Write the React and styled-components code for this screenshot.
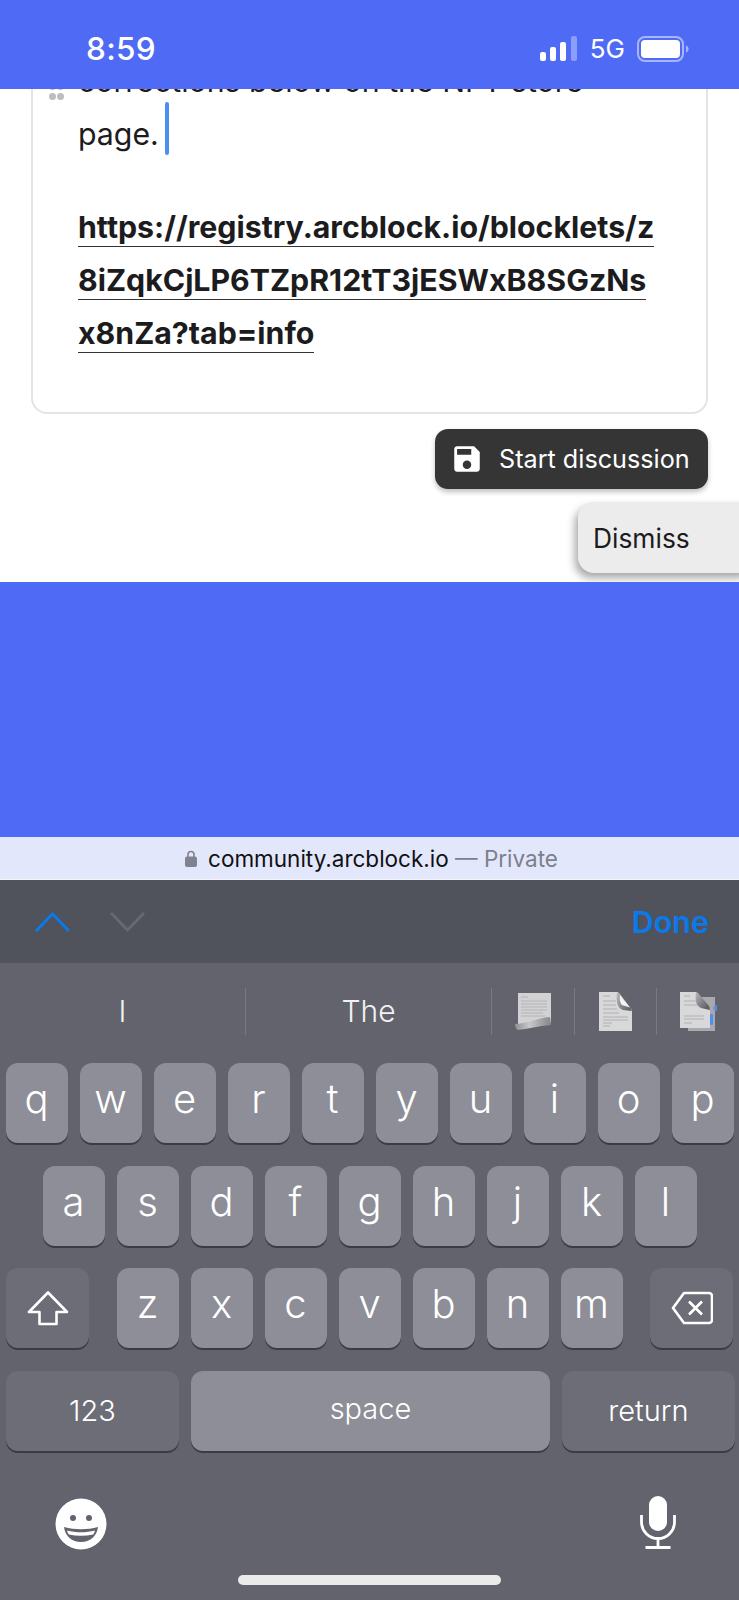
import React from 'react';
import styled, { createGlobalStyle } from 'styled-components';

const GlobalStyle = createGlobalStyle`
  html, body {
    margin: 0;
    padding: 0;
    background: #4f6bf5;
    font-family: Inter, 'Liberation Sans', sans-serif;
  }
`;

const Phone = styled.div`
  width: 739px;
  height: 1600px;
  display: flex;
  flex-direction: column;
  overflow: hidden;
`;

const StatusBar = styled.div`
  height: 89px;
  flex: none;
  background: #4f6bf5;
  color: #fff;
  display: flex;
  align-items: center;
  padding: 8px 50px 0 86px;
  box-sizing: border-box;
  position: relative;
  z-index: 2;
`;

const Time = styled.div`
  font-size: 31.5px;
  font-weight: 500;
  letter-spacing: 0.3px;
  flex: 1;
`;

const StatusRight = styled.div`
  display: flex;
  align-items: center;
  gap: 12px;
`;

const Network = styled.span`
  font-size: 26px;
  font-weight: 400;
`;

const Page = styled.div`
  height: 493px;
  flex: none;
  background: #fff;
  padding: 0 31px;
  position: relative;
  overflow: hidden;
`;

const EditorCard = styled.div`
  height: 461px;
  margin-top: -136px;
  box-sizing: border-box;
  border: 2px solid #e4e4e6;
  border-radius: 16px;
  padding: 100px 0 0 45px;
  color: #1c1c1e;
  font-size: 30.3px;
  line-height: 53px;
  position: relative;
`;

const DragHandle = styled.div`
  position: absolute;
  left: 16px;
  top: 128px;
  display: grid;
  grid-template-columns: 7px 7px;
  gap: 3px 1px;
  span {
    width: 7px;
    height: 7px;
    border-radius: 50%;
    background: #bdbdbd;
  }
`;

const Paragraph = styled.div`
  white-space: pre;
  margin-bottom: 40px;
`;

const Caret = styled.span`
  display: inline-block;
  width: 4px;
  height: 53px;
  margin: -20px 0 -20px 6px;
  border-radius: 2px;
  background: #4a90ee;
  vertical-align: 10.5px;
`;

const LinkLine = styled.div`
  font-weight: 700;
`;

const LinkText = styled.span`
  border-bottom: 1.5px solid #333;
  padding-bottom: 1px;
`;

const SaveButton = styled.div`
  width: 273px;
  height: 60px;
  margin: 15px 0 0 auto;
  box-sizing: border-box;
  padding-left: 15px;
  display: flex;
  align-items: center;
  gap: 15px;
  border-radius: 13px;
  background: #353535;
  color: #fff;
  font-size: 25.2px;
  font-weight: 400;
  box-shadow: 0 3px 5px rgba(0, 0, 0, 0.25);
`;

const DismissTab = styled.div`
  position: absolute;
  left: 578px;
  top: 413px;
  width: 180px;
  height: 71px;
  box-sizing: border-box;
  padding-left: 15px;
  display: flex;
  align-items: center;
  border-radius: 16px;
  background: #ececec;
  color: #1c1c1e;
  font-size: 26.4px;
  box-shadow: -3px 5px 8px rgba(0, 0, 0, 0.35);
`;

const BlueGap = styled.div`
  height: 255px;
  flex: none;
  background: #4f6bf5;
`;

const UrlBar = styled.div`
  height: 43px;
  flex: none;
  box-sizing: border-box;
  background: #e3e7fb;
  border-bottom: 1px solid #f4f4f6;
  padding-left: 4px;
  display: flex;
  align-items: center;
  justify-content: center;
  gap: 11px;
  font-size: 22.5px;
  color: #111;
`;

const Muted = styled.span`
  color: #7d7f8d;
`;

const Toolbar = styled.div`
  height: 83px;
  flex: none;
  box-sizing: border-box;
  padding: 0 30px 0 35px;
  background: #50525c;
  display: flex;
  align-items: center;
  gap: 40px;
`;

const Done = styled.div`
  margin-left: auto;
  color: #0a7aea;
  font-size: 30.5px;
  font-weight: 600;
`;

const Keyboard = styled.div`
  flex: 1;
  background: #62636d;
  position: relative;
`;

const Suggestions = styled.div`
  height: 100px;
  box-sizing: border-box;
  padding-bottom: 4px;
  display: flex;
  align-items: center;
  color: #f2f2f4;
  font-size: 30px;
  font-weight: 300;
`;

const Suggestion = styled.div`
  width: ${({ $width }) => $width}px;
  height: 47px;
  flex: none;
  display: flex;
  align-items: center;
  justify-content: center;
  border-right: ${({ $last }) => ($last ? 'none' : '1px solid #787983')};
  box-sizing: border-box;
`;

const KeyRows = styled.div`
  display: flex;
  flex-direction: column;
  gap: 22.5px;
  padding: 0 6px;
`;

const KeyRow = styled.div`
  display: flex;
  gap: 12px;
  justify-content: ${({ $justify }) => $justify || 'center'};
`;

const KeyGroup = styled.div`
  display: flex;
  gap: 12px;
`;

const Key = styled.div`
  width: ${({ $width }) => $width || 62}px;
  height: 80px;
  flex: none;
  border-radius: 12px;
  background: ${({ $dark }) => ($dark ? '#6c6d76' : '#8d8e97')};
  box-shadow: 0 2px 0 #3b3c43;
  color: #fff;
  display: flex;
  align-items: center;
  justify-content: center;
  font-size: ${({ $small }) => ($small ? 29 : 40)}px;
  font-weight: 300;
  padding-bottom: ${({ $small, $lift }) => ($lift ? $lift : $small ? 0 : 9)}px;
  box-sizing: border-box;
`;

const BottomIcons = styled.div`
  display: flex;
  justify-content: space-between;
  align-items: flex-start;
  padding: 47px 63px 0 55px;
`;

const MicSlot = styled.div`
  margin-top: -2px;
`;

const HomeIndicator = styled.div`
  position: absolute;
  left: 238px;
  bottom: 15px;
  width: 263px;
  height: 10px;
  border-radius: 5px;
  background: #ebebeb;
`;

const rowOne = ['q', 'w', 'e', 'r', 't', 'y', 'u', 'i', 'o', 'p'];
const rowTwo = ['a', 's', 'd', 'f', 'g', 'h', 'j', 'k', 'l'];
const rowThree = ['z', 'x', 'c', 'v', 'b', 'n', 'm'];

const SignalIcon = () => (
  <svg width="38" height="25" viewBox="0 0 38 25">
    <rect x="0" y="16" width="6" height="9" rx="2" fill="#fff" />
    <rect x="10" y="11" width="6" height="14" rx="2" fill="#fff" />
    <rect x="20" y="6" width="6" height="19" rx="2" fill="#fff" />
    <rect x="31" y="0" width="6" height="25" rx="2" fill="#fff" fillOpacity="0.35" />
  </svg>
);

const BatteryIcon = () => (
  <svg width="52" height="26" viewBox="0 0 52 26">
    <rect x="1" y="1" width="45" height="24" rx="7" fill="none" stroke="#fff" strokeOpacity="0.5" strokeWidth="2" />
    <rect x="4" y="4" width="39" height="18" rx="4" fill="#fff" />
    <path d="M49 9.5c1.6.6 2.6 2 2.6 3.5s-1 2.9-2.6 3.5z" fill="#fff" fillOpacity="0.5" />
  </svg>
);

const SaveIcon = () => (
  <svg width="34" height="34" viewBox="0 0 24 24" fill="#fff">
    <path d="M17 3H5c-1.11 0-2 .9-2 2v14c0 1.1.89 2 2 2h14c1.1 0 2-.9 2-2V7l-4-4zm-5 16c-1.66 0-3-1.34-3-3s1.34-3 3-3 3 1.34 3 3-1.34 3-3 3zm3-10H5V5h10v4z" />
  </svg>
);

const LockIcon = () => (
  <svg width="12" height="17" viewBox="0 0 12 17">
    <path d="M3 7V4.500a3 3 0 0 1 6 0V7" fill="none" stroke="#80828f" strokeWidth="1.6" />
    <rect x="0" y="6.500" width="12" height="10.500" rx="2" fill="#80828f" />
  </svg>
);

const ChevronIcon = ({ up, color }) => (
  <svg width="35" height="20" viewBox="0 0 35 20">
    <path d={up ? 'M1 19L17.500 2L34 19' : 'M1 1L17.500 18L34 1'} fill="none" stroke={color} strokeWidth="3" />
  </svg>
);

const PageCurlIcon = () => (
  <svg width="36" height="37" viewBox="0 0 36 37">
    <defs>
      <linearGradient id="curlBand" x1="0" y1="0" x2="1" y2="0">
        <stop offset="0" stopColor="#8f8f94" />
        <stop offset="0.4" stopColor="#c8c8ca" />
        <stop offset="1" stopColor="#85858a" />
      </linearGradient>
    </defs>
    <path d="M3 0h33v30L3 32z" fill="#d2d2d4" />
    <path d="M6 4h7M6 8h26M6 11h26M6 14h26M6 17h26M6 20h22M6 23h24" stroke="#b4b4b8" strokeWidth="1" />
    <path d="M0 31c10 0 22-6 35-7l1 8c-12 1-24 4-33 5c-2-1-3-3-3-6z" fill="url(#curlBand)" />
  </svg>
);

const DocumentIcon = () => (
  <svg width="33" height="39" viewBox="0 0 33 39">
    <defs>
      <linearGradient id="foldShade" x1="0" y1="0" x2="1" y2="1">
        <stop offset="0" stopColor="#c0c0c4" />
        <stop offset="1" stopColor="#55555a" />
      </linearGradient>
    </defs>
    <path d="M0 0h19l14 18v21H0z" fill="#d8d8da" />
    <path d="M4 4h7M4 9h13M4 13h13M4 17h14M4 21h16M4 25h25M4 28h25M4 31h9M4 34h7" stroke="#b0b0b4" strokeWidth="1" />
    <path d="M18 0c-1 9 0 16 6 18l9 1l-2-4L21 2z" fill="url(#foldShade)" />
    <path d="M21 3l10 12.500l-8-2.500c-2-2-2.500-6-2-10z" fill="#f4f4f5" />
  </svg>
);

const DocumentStackIcon = () => (
  <svg width="37" height="39" viewBox="0 0 37 39">
    <defs>
      <linearGradient id="stackShade" x1="0" y1="0" x2="1" y2="1">
        <stop offset="0" stopColor="#b8b8bc" />
        <stop offset="1" stopColor="#4f4f54" />
      </linearGradient>
    </defs>
    <path d="M8 5h27v34H8z" fill="#a9a9ad" />
    <path d="M0 0h16l14 17v19H0z" fill="#d8d8da" />
    <path d="M4 4h6M4 9h12M4 13h13M4 24h20M4 27h20M4 31h8" stroke="#b0b0b4" strokeWidth="1" />
    <path d="M16 0c-1 8 0 14 5 16l9 2l-1-4L18 1z" fill="url(#stackShade)" />
    <circle cx="36" cy="16" r="3" fill="#5b93e8" opacity="0.8" />
    <rect x="30" y="22" width="3" height="11" rx="1" fill="#4a90ee" />
  </svg>
);

const ShiftIcon = () => (
  <svg width="42" height="35" viewBox="0 0 42 35">
    <path d="M21 1.500L2 21h10.500v12h17V21H40z" fill="none" stroke="#fff" strokeWidth="2.600" strokeLinejoin="round" />
  </svg>
);

const BackspaceIcon = () => (
  <svg width="42" height="34" viewBox="0 0 42 34">
    <path d="M13 2h25a3 3 0 0 1 3 3v24a3 3 0 0 1-3 3H13L2 17z" fill="none" stroke="#fff" strokeWidth="2.600" strokeLinejoin="round" />
    <path d="M18 10.500l13 13M31 10.500l-13 13" stroke="#fff" strokeWidth="2.600" />
  </svg>
);

const EmojiIcon = () => (
  <svg width="52" height="52" viewBox="0 0 52 52">
    <circle cx="26" cy="26" r="25.500" fill="#fff" />
    <circle cx="18" cy="20" r="3" fill="#62636d" />
    <circle cx="34" cy="20" r="3" fill="#62636d" />
    <path d="M9 29c11 3 23 3 34 0c-1 9-8 15-17 15S10 38 9 29z" fill="#62636d" />
    <path d="M12 32.500c9 2.400 19 2.400 28 0c-.4 1.600-1 2.800-1.800 4c-8 1.800-16.400 1.800-24.400 0c-.8-1.200-1.400-2.400-1.800-4z" fill="#fff" />
  </svg>
);

const MicIcon = () => (
  <svg width="36" height="53" viewBox="0 0 36 53">
    <rect x="9" y="0" width="18" height="35" rx="9" fill="#fff" />
    <path d="M1.500 19v7a16.500 16.500 0 0 0 33 0v-7M18 43v8M5.500 51.500h25" fill="none" stroke="#fff" strokeWidth="2.800" />
  </svg>
);

const App = () => {
  return (
    <>
      <GlobalStyle />
      <Phone>
        <StatusBar>
          <Time>8:59</Time>
          <StatusRight>
            <SignalIcon />
            <Network>5G</Network>
            <BatteryIcon />
          </StatusRight>
        </StatusBar>

        <Page>
          <EditorCard>
            <DragHandle>
              <span /><span /><span /><span />
            </DragHandle>
            <Paragraph>
              corrections below on the NFT store{'\n'}page.<Caret />
            </Paragraph>
            <LinkLine><LinkText>https://registry.arcblock.io/blocklets/z</LinkText></LinkLine>
            <LinkLine><LinkText>8iZqkCjLP6TZpR12tT3jESWxB8SGzNs</LinkText></LinkLine>
            <LinkLine><LinkText>x8nZa?tab=info</LinkText></LinkLine>
          </EditorCard>
          <SaveButton>
            <SaveIcon />
            Start discussion
          </SaveButton>
          <DismissTab>Dismiss</DismissTab>
        </Page>

        <BlueGap />

        <UrlBar>
          <LockIcon />
          <span>community.arcblock.io <Muted>— Private</Muted></span>
        </UrlBar>

        <Toolbar>
          <ChevronIcon up color="#0a7aea" />
          <ChevronIcon color="#666873" />
          <Done>Done</Done>
        </Toolbar>

        <Keyboard>
          <Suggestions>
            <Suggestion $width={246}>I</Suggestion>
            <Suggestion $width={246}>The</Suggestion>
            <Suggestion $width={83}><PageCurlIcon /></Suggestion>
            <Suggestion $width={82}><DocumentIcon /></Suggestion>
            <Suggestion $width={82} $last><DocumentStackIcon /></Suggestion>
          </Suggestions>

          <KeyRows>
            <KeyRow>
              {rowOne.map((letter) => <Key key={letter}>{letter}</Key>)}
            </KeyRow>
            <KeyRow>
              {rowTwo.map((letter) => <Key key={letter}>{letter}</Key>)}
            </KeyRow>
            <KeyRow $justify="space-between">
              <Key $dark $small $width={83}><ShiftIcon /></Key>
              <KeyGroup>
                {rowThree.map((letter) => <Key key={letter}>{letter}</Key>)}
              </KeyGroup>
              <Key $dark $small $width={83}><BackspaceIcon /></Key>
            </KeyRow>
            <KeyRow $justify="space-between">
              <Key $dark $small $width={173}>123</Key>
              <Key $small $lift={4} $width={359}>space</Key>
              <Key $dark $small $width={173}>return</Key>
            </KeyRow>
          </KeyRows>

          <BottomIcons>
            <EmojiIcon />
            <MicSlot><MicIcon /></MicSlot>
          </BottomIcons>
          <HomeIndicator />
        </Keyboard>
      </Phone>
    </>
  );
};

export default App;
